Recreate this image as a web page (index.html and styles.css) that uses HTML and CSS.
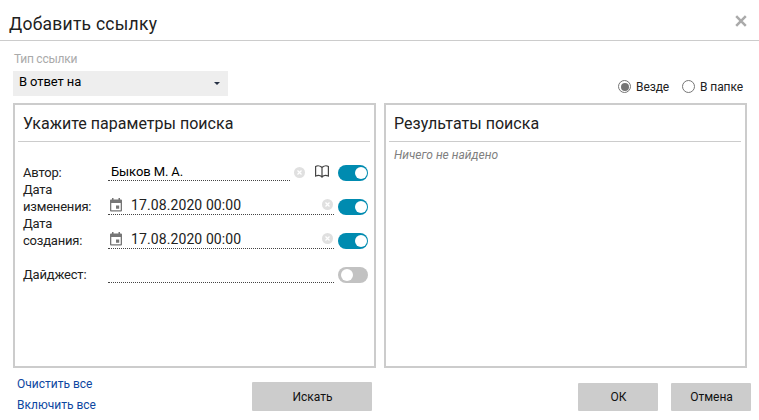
FILE: index.html
```html
<!DOCTYPE html>
<html lang="ru">
<head>
<meta charset="utf-8">
<title>Добавить ссылку</title>
<link rel="stylesheet" href="styles.css">
</head>
<body>
<svg class="defs" width="0" height="0">
  <symbol id="clear" viewBox="0 0 11 11"><circle cx="5.5" cy="5.5" r="5.5" fill="#e0e0e0"/><path d="M3.5 3.5l4 4M7.5 3.5l-4 4" stroke="#fff" stroke-width="1.2"/></symbol>
  <symbol id="calendar" viewBox="0 0 12 14"><path fill="#757575" fill-rule="evenodd" d="M2 0h1.5v1.5h5V0H10v1.5h1a1 1 0 0 1 1 1V12.500a1 1 0 0 1-1 1H1a1 1 0 0 1-1-1V2.500a1 1 0 0 1 1-1h1zM1.300 5v7.200h9.400V5zM6 7.500h3.200v3.200H6z"/></symbol>
</svg>
<div class="dialog">
  <header class="header">
    <h1 class="title">Добавить ссылку</h1>
    <svg class="close" width="12" height="12" viewBox="0 0 12 12"><path d="M1.200 1.200l9.600 9.600M10.800 1.200l-9.600 9.600" stroke="#aaa" stroke-width="2.500"/></svg>
  </header>
  <div class="controls">
    <div class="type">
      <div class="type-label">Тип ссылки</div>
      <div class="select"><span>В ответ на</span><svg width="6" height="3" viewBox="0 0 6 3"><path d="M0 0h6L3 3z" fill="#263145"/></svg></div>
    </div>
    <div class="radios">
      <label class="radio"><span class="dot checked"></span>Везде</label>
      <label class="radio"><span class="dot"></span>В папке</label>
    </div>
  </div>
  <main class="panels">
    <section class="panel">
      <h2 class="panel-title">Укажите параметры поиска</h2>
      <div class="rows">
        <div class="row">
          <div class="label">Автор:</div>
          <div class="field author">Быков М. А.</div>
          <svg class="clear outside" width="11" height="11"><use href="#clear"/></svg>
          <svg class="book" width="14" height="13" viewBox="0 0 14 13"><path d="M7 2.500C5.500.8 2.500.5.600 1.500v9.500c2-.9 4.900-.7 6.400 1 1.500-1.700 4.400-1.900 6.400-1V1.500C11.500.5 8.500.8 7 2.500zV12" fill="none" stroke="#444" stroke-width="1.200"/></svg>
          <span class="toggle on"></span>
        </div>
        <div class="row">
          <div class="label">Дата изменения:</div>
          <div class="field date"><svg class="calendar" width="12" height="14"><use href="#calendar"/></svg><span>17.08.2020 00:00</span><svg class="clear" width="11" height="11"><use href="#clear"/></svg></div>
          <span class="toggle on"></span>
        </div>
        <div class="row">
          <div class="label">Дата создания:</div>
          <div class="field date"><svg class="calendar" width="12" height="14"><use href="#calendar"/></svg><span>17.08.2020 00:00</span><svg class="clear" width="11" height="11"><use href="#clear"/></svg></div>
          <span class="toggle on"></span>
        </div>
        <div class="row">
          <div class="label">Дайджест:</div>
          <div class="field"></div>
          <span class="toggle"></span>
        </div>
      </div>
    </section>
    <section class="panel">
      <h2 class="panel-title">Результаты поиска</h2>
      <p class="empty">Ничего не найдено</p>
    </section>
  </main>
  <footer class="footer">
    <div class="links"><a>Очистить все</a><a>Включить все</a></div>
    <button class="button search">Искать</button>
    <button class="button ok">ОК</button>
    <button class="button cancel">Отмена</button>
  </footer>
</div>
</body>
</html>
```
FILE: styles.css
```css
* { box-sizing: border-box; }
body { margin: 0; background: #fff; color: #212121; font-family: Roboto, sans-serif; font-size: 13px; overflow: hidden; }
.defs { position: absolute; }
.dialog { width: 759px; height: 420px; }
.header { height: 41px; border-bottom: 1px solid #ccc; display: flex; justify-content: space-between; padding: 14px 12px 0 9px; }
.title { margin: 0; font-size: 17.5px; line-height: 20px; font-weight: 400; letter-spacing: .25px; }
.close { margin-top: 1px; }
.controls { height: 62px; display: flex; justify-content: space-between; padding: 10px 16px 0 13px; }
.type-label { height: 20px; line-height: 16px; padding-left: 1px; font-size: 12px; letter-spacing: -.25px; color: #aaa; }
.select { width: 215px; height: 25px; background: #eee; color: #000; display: flex; align-items: center; justify-content: space-between; padding: 0 8px 4px 6px; letter-spacing: -.1px; }
.select svg { margin-top: 4px; }
.radios { display: flex; gap: 13px; padding-top: 28px; font-size: 12px; line-height: 16px; letter-spacing: -.1px; }
.radio { display: flex; align-items: flex-start; gap: 5px; }
.dot { width: 13px; height: 13px; margin-top: 1px; border: 1px solid #767676; border-radius: 50%; display: flex; align-items: center; justify-content: center; }
.checked::after { content: ""; width: 8px; height: 8px; border-radius: 50%; background: #757575; }
.panels { display: flex; gap: 8px; padding-left: 13px; height: 265px; }
.panel { width: 363px; border: 2px solid #ccc; padding: 0 4px 0 3px; }
.panel-title { margin: 0; height: 37px; padding: 9px 5px 0; border-bottom: 1px solid #ccc; font-size: 16px; line-height: 20px; font-weight: 400; letter-spacing: .02px; }
.rows { padding: 5px 2px 0 5px; }
.row { display: flex; height: 34px; align-items: flex-end; }
.label { width: 85px; line-height: 17px; padding-right: 10px; letter-spacing: -.2px; }
.field { flex: 1; height: 18px; margin-right: 4px; border-bottom: 1px dotted #444; line-height: 18px; }
.author { flex: 0 0 182px; color: #000; padding-left: 3px; margin-right: 4px; letter-spacing: -.1px; }
.date { display: flex; height: 20px; font-size: 14px; line-height: 20px; padding: 0 1px 0 2px; letter-spacing: .1px; }
.calendar { margin: 3px 9px 0 0; }
.clear { margin: 4px 0 0 auto; }
.outside { margin: 0 10px 3px 0; }
.book { margin: 0 9px 3px 0; }
.toggle { width: 30px; height: 16px; border-radius: 8px; background: #c2c2c2; padding: 2px 3px; display: flex; }
.toggle::after { content: ""; width: 12px; height: 12px; border-radius: 50%; background: #fff; }
.toggle.on { background: #008bb0; justify-content: flex-end; padding-right: 1px; }
.empty { margin: 0; padding: 5px 5px; line-height: 16px; font-size: 12px; font-style: italic; color: #808080; }
.footer { display: flex; align-items: flex-end; height: 43px; padding-left: 17px; }
.links { width: 235px; height: 35px; display: flex; flex-direction: column; gap: 5px; color: #0d47a1; font-size: 12px; line-height: 16px; letter-spacing: 0; }
.button { border: 0; border-radius: 1px; background: #ccc; color: #111; padding: 0 0 0 1px; font: 12px Roboto, sans-serif; height: 28px; width: 80px; }
.search { width: 120px; height: 29px; }
.ok { margin-left: 206px; }
.cancel { margin-left: 13px; }
```
